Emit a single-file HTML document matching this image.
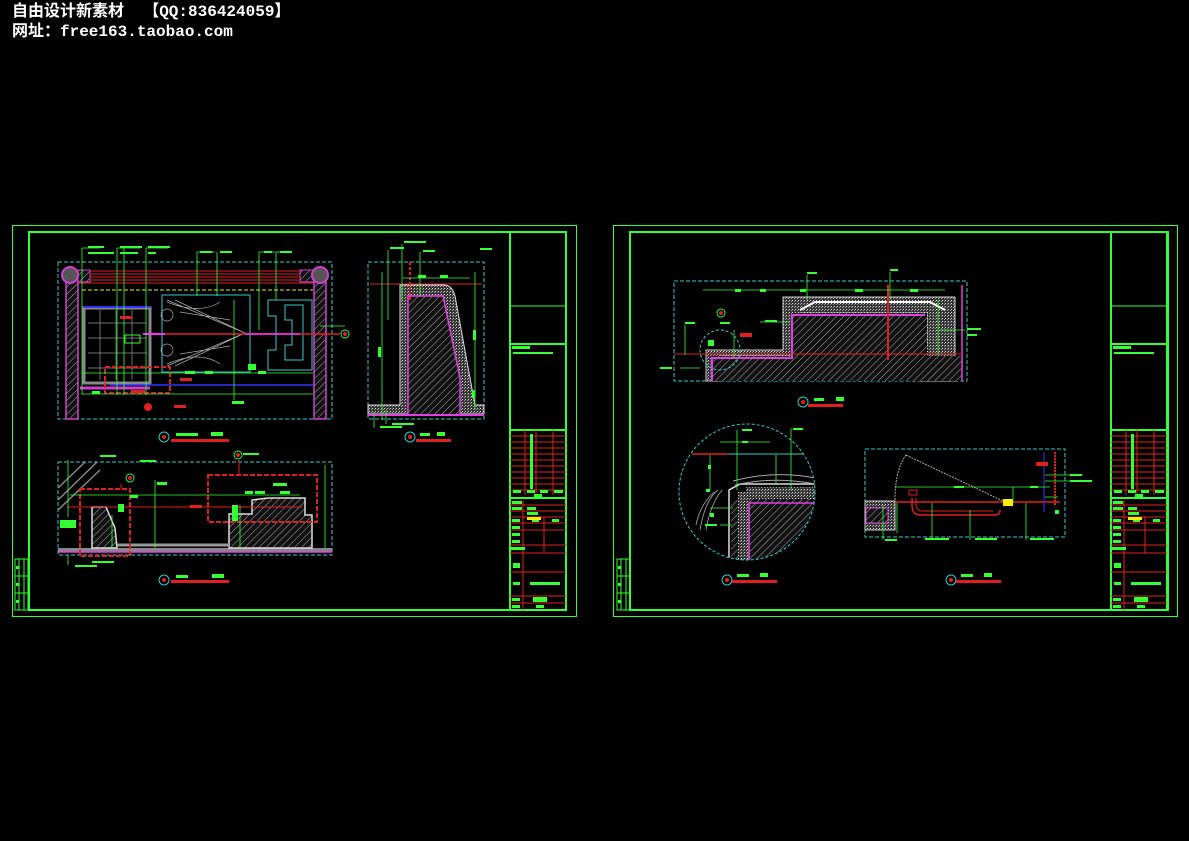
<!DOCTYPE html>
<html><head><meta charset="utf-8"><style>
html,body{margin:0;padding:0;background:#000;width:1189px;height:841px;overflow:hidden}
.hd{position:absolute;left:12px;color:#fff;font-family:"Liberation Mono","Noto Sans CJK SC",monospace;font-size:16px;font-weight:bold;line-height:18px;white-space:pre}
svg{position:absolute;left:0;top:0}
</style></head><body>
<div class="hd" style="top:3px">自由设计新素材  【QQ:836424059】</div>
<div class="hd" style="top:23px">网址：free163.taobao.com</div>
<svg width="1189" height="841" viewBox="0 0 1189 841">
<defs>
<pattern id="h" width="5" height="5" patternUnits="userSpaceOnUse" patternTransform="rotate(45)"><rect width="5" height="5" fill="#111"/><line x1="0" y1="0" x2="0" y2="5" stroke="#aaa" stroke-width="1"/></pattern>
<pattern id="dt" width="3" height="3" patternUnits="userSpaceOnUse"><rect width="3" height="3" fill="#333"/><rect width="1" height="1" fill="#ddd"/><rect x="2" y="1" width="1" height="1" fill="#999"/></pattern>
<clipPath id="cc"><circle cx="747" cy="492" r="68"/></clipPath>
<g id="tb">
 <rect x="510" y="232" width="56" height="378" fill="none" stroke="#33ff33" stroke-width="2"/>
 <line x1="510" y1="306" x2="566" y2="306" stroke="#33ff33"/>
 <line x1="510" y1="344" x2="566" y2="344" stroke="#33ff33" stroke-width="2"/>
 <rect x="512" y="346" width="18" height="3" fill="#33ff33"/>
 <rect x="513" y="352" width="40" height="2" fill="#33ff33"/>
 <line x1="510" y1="430" x2="566" y2="430" stroke="#33ff33" stroke-width="2"/>
 <g stroke="#e02020" stroke-width="1">
  <line x1="510" y1="436" x2="566" y2="436"/><line x1="510" y1="442" x2="566" y2="442"/><line x1="510" y1="448" x2="566" y2="448"/><line x1="510" y1="454" x2="566" y2="454"/><line x1="510" y1="460" x2="566" y2="460"/><line x1="510" y1="466" x2="566" y2="466"/><line x1="510" y1="472" x2="566" y2="472"/><line x1="510" y1="478" x2="566" y2="478"/><line x1="510" y1="484" x2="566" y2="484"/><line x1="510" y1="490" x2="566" y2="490"/>
  <line x1="510" y1="505" x2="566" y2="505"/><line x1="510" y1="511" x2="566" y2="511"/><line x1="510" y1="517" x2="566" y2="517"/><line x1="510" y1="523" x2="566" y2="523"/><line x1="510" y1="530" x2="566" y2="530"/><line x1="510" y1="545" x2="566" y2="545"/><line x1="510" y1="553" x2="566" y2="553"/><line x1="510" y1="572" x2="566" y2="572"/><line x1="510" y1="596" x2="566" y2="596"/><line x1="510" y1="603" x2="566" y2="603"/>
  <line x1="525" y1="430" x2="525" y2="495"/><line x1="536" y1="430" x2="536" y2="495"/><line x1="553" y1="430" x2="553" y2="495"/>
  <line x1="523" y1="500" x2="523" y2="610"/><line x1="544" y1="517" x2="544" y2="553"/>
 </g>
 <line x1="510" y1="498" x2="566" y2="498" stroke="#33ff33" stroke-width="2"/>
 <g fill="#33ff33">
  <rect x="530" y="434" width="3" height="55"/>
  <rect x="513" y="490" width="8" height="3"/><rect x="527" y="490" width="8" height="3"/><rect x="540" y="490" width="8" height="3"/><rect x="554" y="490" width="9" height="3"/>
  <rect x="534" y="494" width="8" height="3"/>
  <rect x="512" y="501" width="10" height="3"/><rect x="512" y="507" width="10" height="3"/><rect x="527" y="507" width="9" height="3"/><rect x="527" y="512" width="11" height="3"/>
  <rect x="512" y="519" width="8" height="3"/><rect x="532" y="519" width="7" height="3"/><rect x="552" y="519" width="7" height="3"/>
  <rect x="512" y="526" width="8" height="3"/><rect x="512" y="533" width="8" height="3"/><rect x="512" y="540" width="8" height="3"/><rect x="511" y="547" width="14" height="3"/>
  <rect x="513" y="563" width="7" height="5"/><rect x="513" y="582" width="7" height="3"/>
  <rect x="530" y="582" width="30" height="3"/>
  <rect x="533" y="597" width="14" height="5"/><rect x="512" y="598" width="8" height="3"/><rect x="512" y="605" width="8" height="3"/><rect x="536" y="605" width="8" height="3"/>
 </g>
 <rect x="527" y="517" width="14" height="3" fill="#ffee00"/>
</g>
<g id="sb">
 <rect x="15" y="559" width="13" height="51" fill="none" stroke="#33ff33"/>
 <line x1="19" y1="559" x2="19" y2="610" stroke="#33ff33"/><line x1="24" y1="559" x2="24" y2="610" stroke="#33ff33"/>
 <line x1="15" y1="576" x2="28" y2="576" stroke="#33ff33"/><line x1="15" y1="593" x2="28" y2="593" stroke="#33ff33"/>
 <rect x="16" y="566" width="3" height="3" fill="#33ff33"/><rect x="16" y="583" width="3" height="3" fill="#33ff33"/><rect x="16" y="600" width="3" height="3" fill="#33ff33"/>
</g>
</defs>

<!-- LEFT SHEET -->
<rect x="12.5" y="225.5" width="564" height="391" fill="none" stroke="#33ff33"/>
<rect x="29" y="232" width="537" height="378" fill="none" stroke="#33ff33" stroke-width="2"/>
<use href="#tb"/><use href="#sb"/>

<!-- plan -->
<rect x="58" y="262" width="274" height="157" fill="none" stroke="#33cccc" stroke-dasharray="4,2"/>
<g stroke="#e02020"><line x1="78" y1="271" x2="314" y2="271"/><line x1="78" y1="274" x2="314" y2="274"/><line x1="78" y1="277" x2="314" y2="277"/><line x1="78" y1="280" x2="314" y2="280"/><line x1="78" y1="283" x2="314" y2="283"/></g>
<rect x="66" y="280" width="12" height="139" fill="url(#h)" stroke="#d040d0" stroke-width="1.5"/>
<rect x="314" y="280" width="12" height="139" fill="url(#h)" stroke="#d040d0" stroke-width="1.5"/>
<rect x="78" y="270" width="12" height="12" fill="url(#h)" stroke="#d040d0"/>
<rect x="300" y="270" width="14" height="12" fill="url(#h)" stroke="#d040d0"/>
<circle cx="70" cy="275" r="8" fill="#555" stroke="#d040d0" stroke-width="2"/>
<circle cx="320" cy="275" r="8" fill="#555" stroke="#d040d0" stroke-width="2"/>
<line x1="82" y1="290" x2="313" y2="290" stroke="#eeee00" stroke-dasharray="4,2"/>
<rect x="84" y="308" width="66" height="75" fill="none" stroke="#888" stroke-width="3"/>
<line x1="84" y1="307" x2="150" y2="307" stroke="#3333ff" stroke-width="2"/>
<line x1="80" y1="388" x2="150" y2="388" stroke="#d040d0" stroke-width="3"/>
<g stroke="#999" stroke-width="0.7"><line x1="88" y1="323" x2="147" y2="323"/><line x1="88" y1="338" x2="147" y2="338"/><line x1="88" y1="353" x2="147" y2="353"/><line x1="88" y1="368" x2="147" y2="368"/><line x1="100" y1="310" x2="100" y2="380"/><line x1="116" y1="310" x2="116" y2="380"/><line x1="132" y1="310" x2="132" y2="380"/></g>
<rect x="125" y="335" width="15" height="8" fill="none" stroke="#33ff33"/>
<rect x="162" y="295" width="88" height="77" fill="none" stroke="#33cccc"/>
<g stroke="#aaa" stroke-width="0.7" fill="none"><path d="M167 300 L245 333 L167 366 M175 300 L245 333 L175 366 M167 302 Q200 315 220 302 M167 364 Q200 350 220 364 M180 312 L230 320 M180 354 L230 346"/><circle cx="167" cy="315" r="6"/><circle cx="167" cy="350" r="6"/></g>
<path d="M268 300 H312 V370 H268 V350 H276 V316 H268 Z" fill="none" stroke="#33cccc"/>
<path d="M285 305 H303 V360 H285 V345 H292 V320 H285 Z" fill="none" stroke="#33cccc"/>
<line x1="143" y1="334" x2="340" y2="334" stroke="#e02020" stroke-width="1.5"/>
<line x1="143" y1="334" x2="165" y2="334" stroke="#ff30ff" stroke-width="2"/>
<line x1="245" y1="334" x2="300" y2="334" stroke="#ff30ff" stroke-width="1.5"/>
<circle cx="345" cy="334" r="4" fill="none" stroke="#33ff33"/><circle cx="345" cy="334" r="2" fill="#e02020"/>
<rect x="105" y="367" width="65" height="26" fill="none" stroke="#e02020" stroke-width="2" stroke-dasharray="5,2"/>
<line x1="110" y1="385" x2="313" y2="385" stroke="#3333ff" stroke-width="1.5"/>
<g stroke="#33ff33" stroke-width="0.8" fill="none">
 <line x1="82" y1="373" x2="313" y2="373"/><line x1="82" y1="394" x2="313" y2="394"/>
 <line x1="117" y1="248" x2="117" y2="395"/><line x1="124" y1="248" x2="124" y2="395"/><line x1="146" y1="248" x2="146" y2="395"/>
 <line x1="82" y1="248" x2="82" y2="395"/><line x1="197" y1="252" x2="197" y2="296"/><line x1="217" y1="252" x2="217" y2="296"/>
 <line x1="259" y1="252" x2="259" y2="330"/><line x1="276" y1="252" x2="276" y2="300"/><line x1="234" y1="300" x2="234" y2="400"/>
 <line x1="82" y1="248" x2="100" y2="248"/><line x1="117" y1="248" x2="140" y2="248"/><line x1="146" y1="248" x2="168" y2="248"/><line x1="197" y1="252" x2="215" y2="252"/><line x1="259" y1="252" x2="275" y2="252"/><line x1="276" y1="252" x2="292" y2="252"/>
 <line x1="320" y1="326" x2="345" y2="326"/>
</g>
<g fill="#33ff33"><rect x="88" y="246" width="16" height="2"/><rect x="88" y="252" width="26" height="2"/><rect x="120" y="246" width="22" height="2"/><rect x="120" y="252" width="18" height="2"/><rect x="148" y="246" width="22" height="2"/><rect x="148" y="252" width="8" height="2"/><rect x="200" y="251" width="12" height="2"/><rect x="220" y="251" width="12" height="2"/><rect x="264" y="251" width="8" height="2"/><rect x="280" y="251" width="12" height="2"/><rect x="248" y="364" width="8" height="6"/><rect x="232" y="401" width="12" height="3"/><rect x="92" y="391" width="8" height="3"/><rect x="185" y="371" width="10" height="3"/><rect x="205" y="371" width="8" height="3"/><rect x="258" y="371" width="8" height="3"/></g>
<g fill="#e02020"><rect x="120" y="316" width="12" height="3"/><rect x="174" y="405" width="12" height="3"/><rect x="180" y="378" width="12" height="3"/><rect x="131" y="390" width="14" height="3"/></g>
<circle cx="148" cy="407" r="4" fill="#e02020"/>
<circle cx="164" cy="437" r="5" fill="none" stroke="#33cccc"/><circle cx="164" cy="437" r="2" fill="#e02020"/>
<rect x="171" y="439" width="58" height="3" fill="#e02020"/><rect x="176" y="433" width="22" height="3" fill="#33ff33"/><rect x="211" y="432" width="12" height="4" fill="#33ff33"/>

<!-- section B -->
<rect x="368" y="262" width="116" height="157" fill="none" stroke="#33cccc" stroke-dasharray="4,2"/>
<path d="M400 285 H444 Q452 285 455 296 L470 378 L475 405 H484 V414 H368 V405 H400 Z" fill="url(#dt)" stroke="#ddd"/>
<polygon points="408,296 443,296 460,378 460,415 408,415" fill="url(#h)" stroke="#e040e0" stroke-width="1.5"/>
<line x1="368" y1="415" x2="484" y2="415" stroke="#e040e0" stroke-width="2"/>
<line x1="370" y1="284" x2="482" y2="284" stroke="#e02020"/>
<line x1="410" y1="262" x2="410" y2="300" stroke="#e02020" stroke-width="2" stroke-dasharray="3,2"/>
<g stroke="#33ff33" stroke-width="0.8"><line x1="382" y1="272" x2="382" y2="420"/><line x1="475" y1="272" x2="475" y2="410"/><line x1="403" y1="278" x2="470" y2="278"/><line x1="388" y1="250" x2="388" y2="320"/><line x1="402" y1="244" x2="402" y2="300"/><line x1="420" y1="252" x2="420" y2="296"/><line x1="374" y1="412" x2="374" y2="428"/><line x1="386" y1="410" x2="386" y2="424"/></g>
<g fill="#33ff33"><rect x="390" y="247" width="14" height="2"/><rect x="404" y="241" width="22" height="2"/><rect x="423" y="250" width="12" height="2"/><rect x="480" y="248" width="12" height="2"/><rect x="418" y="275" width="8" height="3"/><rect x="440" y="275" width="8" height="3"/><rect x="378" y="347" width="3" height="10"/><rect x="473" y="330" width="3" height="10"/><rect x="380" y="426" width="22" height="2"/><rect x="392" y="423" width="22" height="2"/><rect x="472" y="390" width="3" height="8"/></g>
<circle cx="410" cy="437" r="5" fill="none" stroke="#33cccc"/><circle cx="410" cy="437" r="2" fill="#e02020"/>
<rect x="416" y="439" width="35" height="3" fill="#e02020"/><rect x="420" y="433" width="10" height="3" fill="#33ff33"/><rect x="437" y="432" width="8" height="4" fill="#33ff33"/>

<!-- elevation A -->
<rect x="58" y="462" width="274" height="93" fill="none" stroke="#33cccc" stroke-dasharray="4,2"/>
<path d="M58 488 L85 462 M58 500 L97 462 M58 510 L100 470" stroke="#888" stroke-width="1.5"/>
<rect x="58" y="548" width="274" height="4" fill="#888"/>
<line x1="58" y1="552" x2="332" y2="552" stroke="#e040e0" stroke-width="1.5"/>
<polygon points="92,507 106,507 115,528 117,548 92,548" fill="url(#h)" stroke="#ddd" stroke-width="1.5"/>
<polygon points="229,514 252,514 252,500 268,498 305,498 305,515 312,515 312,548 229,548" fill="url(#h)" stroke="#ddd" stroke-width="1.5"/>
<line x1="117" y1="545" x2="229" y2="545" stroke="#999" stroke-width="3"/>
<rect x="80" y="489" width="50" height="67" fill="none" stroke="#e02020" stroke-width="2" stroke-dasharray="5,2"/>
<rect x="208" y="475" width="109" height="47" fill="none" stroke="#e02020" stroke-width="2" stroke-dasharray="5,2"/>
<line x1="67" y1="507" x2="302" y2="507" stroke="#e02020"/>
<line x1="121" y1="484" x2="121" y2="489" stroke="#e02020"/>
<line x1="239" y1="460" x2="239" y2="475" stroke="#e02020"/>
<circle cx="130" cy="478" r="4" fill="none" stroke="#33ff33"/><circle cx="130" cy="478" r="2" fill="#e02020"/>
<circle cx="238" cy="455" r="4" fill="none" stroke="#33ff33"/><circle cx="238" cy="455" r="2" fill="#e02020"/>
<g stroke="#33ff33" stroke-width="0.8"><line x1="70" y1="495" x2="300" y2="495"/><line x1="155" y1="480" x2="155" y2="548"/><line x1="68" y1="460" x2="68" y2="517"/><line x1="240" y1="505" x2="240" y2="548"/><line x1="325" y1="465" x2="325" y2="548"/><line x1="112" y1="515" x2="112" y2="548"/><line x1="68" y1="555" x2="68" y2="565"/></g>
<g fill="#33ff33"><rect x="60" y="520" width="16" height="8"/><rect x="100" y="455" width="16" height="2"/><rect x="140" y="460" width="16" height="2"/><rect x="157" y="482" width="10" height="3"/><rect x="118" y="504" width="6" height="8"/><rect x="130" y="495" width="8" height="3"/><rect x="245" y="491" width="8" height="3"/><rect x="255" y="491" width="10" height="3"/><rect x="280" y="491" width="10" height="3"/><rect x="273" y="483" width="14" height="3"/><rect x="232" y="505" width="6" height="16"/><rect x="75" y="565" width="22" height="2"/><rect x="92" y="561" width="22" height="2"/><rect x="243" y="453" width="16" height="2"/></g>
<rect x="190" y="505" width="12" height="3" fill="#e02020"/>
<circle cx="164" cy="580" r="5" fill="none" stroke="#33cccc"/><circle cx="164" cy="580" r="2" fill="#e02020"/>
<rect x="171" y="580" width="58" height="3" fill="#e02020"/><rect x="176" y="575" width="12" height="3" fill="#33ff33"/><rect x="212" y="574" width="12" height="4" fill="#33ff33"/>

<!-- RIGHT SHEET -->
<rect x="613.5" y="225.5" width="564" height="391" fill="none" stroke="#33ff33"/>
<rect x="630" y="232" width="538" height="378" fill="none" stroke="#33ff33" stroke-width="2"/>
<use href="#tb" x="601"/><use href="#sb" x="602"/>

<!-- C -->
<rect x="674" y="281" width="293" height="100" fill="none" stroke="#33cccc" stroke-dasharray="4,2"/>
<path d="M783 297 H955 V381 H920 V346 H927 V313 H800 V356 H720 V381 H706 V350 H783 Z" fill="url(#dt)" stroke="#ccc"/>
<polygon points="712,381 712,356 792,356 792,313 927,313 927,356 962,356 962,381" fill="url(#h)"/>
<path d="M712 381 V358 H792 V315 H925" fill="none" stroke="#e040e0" stroke-width="2"/>
<line x1="962" y1="285" x2="962" y2="381" stroke="#e040e0" stroke-width="1.5"/>
<path d="M800 310 L815 302 H930 L945 310" fill="none" stroke="#fff" stroke-width="2"/>
<line x1="674" y1="354" x2="962" y2="354" stroke="#e02020"/>
<line x1="888" y1="285" x2="888" y2="360" stroke="#e02020" stroke-width="2"/>
<circle cx="720" cy="350" r="20" fill="none" stroke="#33cccc" stroke-dasharray="3,2"/>
<g stroke="#33ff33" stroke-width="0.8"><line x1="703" y1="290" x2="945" y2="290"/><line x1="807" y1="275" x2="807" y2="300"/><line x1="890" y1="272" x2="890" y2="300"/><line x1="685" y1="325" x2="685" y2="355"/><line x1="734" y1="330" x2="734" y2="358"/><line x1="760" y1="322" x2="790" y2="322"/><line x1="680" y1="368" x2="700" y2="368"/><line x1="940" y1="330" x2="965" y2="330"/><line x1="938" y1="300" x2="938" y2="355"/></g>
<g fill="#33ff33"><rect x="807" y="272" width="10" height="2"/><rect x="890" y="269" width="8" height="2"/><rect x="735" y="289" width="6" height="3"/><rect x="760" y="289" width="6" height="3"/><rect x="800" y="289" width="6" height="3"/><rect x="855" y="289" width="8" height="3"/><rect x="910" y="289" width="8" height="3"/><rect x="685" y="322" width="10" height="2"/><rect x="720" y="322" width="10" height="2"/><rect x="765" y="320" width="12" height="2"/><rect x="967" y="328" width="14" height="2"/><rect x="967" y="334" width="10" height="2"/><rect x="660" y="367" width="12" height="2"/><rect x="708" y="340" width="6" height="6"/></g>
<circle cx="721" cy="313" r="4" fill="none" stroke="#33ff33"/><circle cx="721" cy="313" r="2" fill="#e02020"/>
<rect x="740" y="333" width="12" height="4" fill="#e02020"/>
<circle cx="803" cy="402" r="5" fill="none" stroke="#33cccc"/><circle cx="803" cy="402" r="2" fill="#e02020"/>
<rect x="808" y="404" width="35" height="3" fill="#e02020"/><rect x="814" y="398" width="10" height="3" fill="#33ff33"/><rect x="836" y="397" width="8" height="4" fill="#33ff33"/>

<!-- circle detail -->
<g clip-path="url(#cc)">
<path d="M729 560 V490 L740 484 H815" fill="none" stroke="#ddd" stroke-width="1.5"/>
<polygon points="731,500 746,500 746,490 815,490 815,528 793,556 746,560 731,560" fill="url(#h)"/>
<rect x="738" y="492" width="12" height="68" fill="url(#dt)"/>
<rect x="746" y="487" width="69" height="12" fill="url(#dt)"/>
<path d="M749 560 V503 H815" fill="none" stroke="#e040e0" stroke-width="1.5"/>
<path d="M733 481 Q775 470 815 478 M735 485 Q775 476 815 484" fill="none" stroke="#aaa"/>
<path d="M718 490 Q705 500 700 530 M722 490 Q710 505 706 530 M714 492 Q700 505 696 525" fill="none" stroke="#aaa" stroke-width="0.8"/>
</g>
<circle cx="747" cy="492" r="68" fill="none" stroke="#33cccc" stroke-dasharray="3,2"/>
<line x1="692" y1="454" x2="728" y2="454" stroke="#e02020" stroke-width="1.5"/>
<line x1="728" y1="454" x2="803" y2="454" stroke="#33cccc"/>
<g stroke="#33ff33" stroke-width="0.8"><line x1="720" y1="442" x2="770" y2="442"/><line x1="737" y1="430" x2="737" y2="490"/><line x1="791" y1="428" x2="791" y2="490"/><line x1="710" y1="455" x2="710" y2="490"/><line x1="776" y1="455" x2="776" y2="485"/><line x1="710" y1="508" x2="733" y2="508"/><line x1="720" y1="525" x2="732" y2="525"/></g>
<g fill="#33ff33"><rect x="742" y="429" width="10" height="2"/><rect x="793" y="428" width="10" height="2"/><rect x="742" y="441" width="6" height="2"/><rect x="708" y="465" width="3" height="4"/><rect x="706" y="489" width="4" height="3"/><rect x="710" y="513" width="4" height="4"/><rect x="705" y="524" width="12" height="2"/></g>
<circle cx="727" cy="580" r="5" fill="none" stroke="#33cccc"/><circle cx="727" cy="580" r="2" fill="#e02020"/>
<rect x="732" y="580" width="45" height="3" fill="#e02020"/><rect x="737" y="574" width="12" height="3" fill="#33ff33"/><rect x="760" y="573" width="8" height="4" fill="#33ff33"/>

<!-- D -->
<rect x="865" y="449" width="200" height="88" fill="none" stroke="#33cccc" stroke-dasharray="4,2"/>
<rect x="865" y="501" width="30" height="29" fill="url(#dt)" stroke="#ccc"/>
<rect x="866" y="508" width="22" height="15" fill="url(#h)" stroke="#e040e0"/>
<path d="M906 455 L1005 502 M906 455 Q895 470 895 500" fill="none" stroke="#aaa" stroke-dasharray="2,1"/>
<line x1="895" y1="502" x2="1060" y2="502" stroke="#e02020" stroke-width="1.5"/>
<path d="M912 498 V505 Q912 515 920 515 H995 Q1000 515 1000 510" fill="none" stroke="#e02020" stroke-width="1.5"/>
<path d="M916 498 V504 Q916 511 922 511 H993" fill="none" stroke="#e02020"/>
<rect x="909" y="490" width="8" height="5" fill="none" stroke="#e02020"/>
<rect x="1003" y="499" width="10" height="7" fill="#ffee00"/>
<line x1="1055" y1="452" x2="1055" y2="505" stroke="#e02020" stroke-width="2" stroke-dasharray="2,1"/>
<line x1="1044" y1="452" x2="1044" y2="512" stroke="#3333ff"/>
<g stroke="#33ff33" stroke-width="0.8"><line x1="895" y1="487" x2="1050" y2="487"/><line x1="897" y1="503" x2="897" y2="533"/><line x1="932" y1="503" x2="932" y2="540"/><line x1="970" y1="510" x2="970" y2="540"/><line x1="1026" y1="503" x2="1026" y2="540"/><line x1="883" y1="505" x2="883" y2="540"/><line x1="1045" y1="475" x2="1070" y2="475"/><line x1="1045" y1="481" x2="1070" y2="481"/><line x1="1045" y1="497" x2="1058" y2="497"/><line x1="1013" y1="487" x2="1013" y2="503"/></g>
<g fill="#33ff33"><rect x="954" y="486" width="10" height="2"/><rect x="1030" y="486" width="8" height="2"/><rect x="925" y="538" width="24" height="2"/><rect x="975" y="538" width="22" height="2"/><rect x="1030" y="538" width="24" height="2"/><rect x="885" y="539" width="12" height="2"/><rect x="1070" y="474" width="12" height="2"/><rect x="1070" y="480" width="22" height="2"/><rect x="1055" y="510" width="4" height="4"/></g>
<rect x="1036" y="462" width="12" height="4" fill="#e02020"/>
<circle cx="951" cy="580" r="5" fill="none" stroke="#33cccc"/><circle cx="951" cy="580" r="2" fill="#e02020"/>
<rect x="956" y="580" width="45" height="3" fill="#e02020"/><rect x="961" y="574" width="12" height="3" fill="#33ff33"/><rect x="984" y="573" width="8" height="4" fill="#33ff33"/>
</svg>
</body></html>
